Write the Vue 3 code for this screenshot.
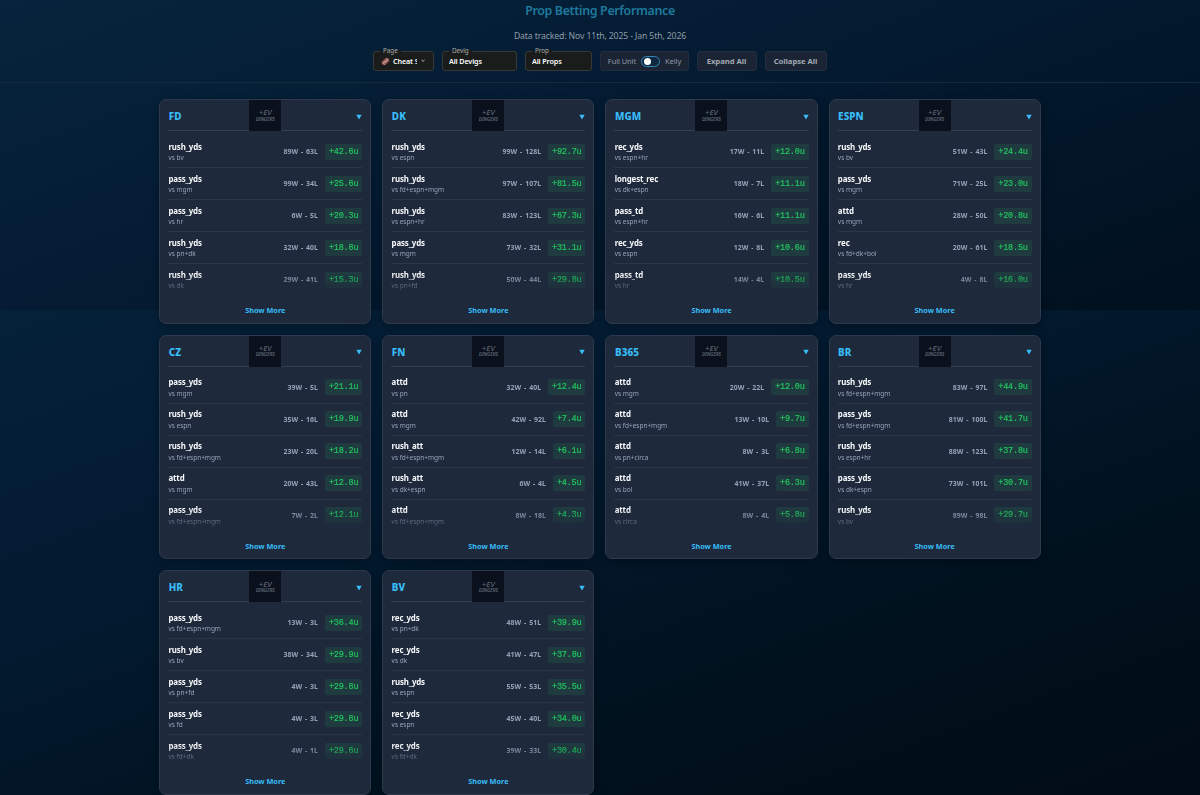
<script setup>
const s = `FD|rush_yds,bv,89W - 63L,42.6;pass_yds,mgm,99W - 34L,25.6;pass_yds,hr,6W - 5L,20.3;rush_yds,pn+dk,32W - 40L,18.8;rush_yds,dk,29W - 41L,15.3
DK|rush_yds,espn,99W - 128L,92.7;rush_yds,fd+espn+mgm,97W - 107L,81.5;rush_yds,espn+hr,83W - 123L,67.3;pass_yds,mgm,73W - 32L,31.1;rush_yds,pn+fd,50W - 44L,29.8
MGM|rec_yds,espn+hr,17W - 11L,12.0;longest_rec,dk+espn,18W - 7L,11.1;pass_td,espn+hr,16W - 6L,11.1;rec_yds,espn,12W - 8L,10.6;pass_td,hr,14W - 4L,10.5
ESPN|rush_yds,bv,51W - 43L,24.4;pass_yds,mgm,71W - 25L,23.0;attd,mgm,28W - 50L,20.8;rec,fd+dk+bol,20W - 61L,18.5;pass_yds,hr,4W - 8L,16.0
CZ|pass_yds,mgm,39W - 5L,21.1;rush_yds,espn,35W - 16L,19.9;rush_yds,fd+espn+mgm,23W - 20L,18.2;attd,mgm,20W - 43L,12.8;pass_yds,fd+espn+mgm,7W - 2L,12.1
FN|attd,pn,32W - 40L,12.4;attd,mgm,42W - 92L,7.4;rush_att,fd+espn+mgm,12W - 14L,6.1;rush_att,dk+espn,6W - 4L,4.5;attd,fd+espn+mgm,8W - 18L,4.3
B365|attd,mgm,20W - 22L,12.0;attd,fd+espn+mgm,13W - 10L,9.7;attd,pn+circa,8W - 3L,6.8;attd,bol,41W - 37L,6.3;attd,circa,8W - 4L,5.8
BR|rush_yds,fd+espn+mgm,83W - 97L,44.9;pass_yds,fd+espn+mgm,81W - 100L,41.7;rush_yds,espn+hr,88W - 123L,37.8;pass_yds,dk+espn,73W - 101L,30.7;rush_yds,bv,89W - 98L,29.7
HR|pass_yds,fd+espn+mgm,13W - 3L,36.4;rush_yds,bv,38W - 34L,29.9;pass_yds,pn+fd,4W - 3L,29.8;pass_yds,fd,4W - 3L,29.8;pass_yds,fd+dk,4W - 1L,29.6
BV|rec_yds,pn+dk,48W - 51L,39.9;rec_yds,dk,41W - 47L,37.8;rush_yds,espn,55W - 53L,35.5;rec_yds,espn,45W - 40L,34.0;rec_yds,fd+dk,39W - 33L,30.4`
const books = s.split('\n').map(line => {
  const [name, rows] = line.split('|')
  return { name, rows: rows.split(';').map(r => { const [prop, vs, record, units] = r.split(','); return { prop, vs, record, units } }) }
})
</script>

<template>
  <div class="page">
    <header>
      <h1>Prop Betting Performance</h1>
      <p class="tracked">Data tracked: Nov 11th, 2025 - Jan 5th, 2026</p>
      <div class="controls">
        <div class="select page-select">
          <span class="label">Page</span>
          <svg class="ball" viewBox="0 0 10 10"><g transform="rotate(-42 5 5)"><ellipse cx="5" cy="5" rx="4.8" ry="2.9" fill="#8d4e49"/><path d="M2.1 2.9v4.2M7.9 2.9v4.2M3.4 5h3.2M4.2 4.2v1.6M5.8 4.2v1.6" stroke="#ded3cf" stroke-width=".8"/></g></svg>
          <span class="value">Cheat Sheets</span>
          <svg class="chev" viewBox="0 0 6 4"><path d="M1.5 1 3 2.4 4.5 1" fill="none" stroke="#ccc" stroke-width=".9"/></svg>
        </div>
        <div class="select devig"><span class="label">Devig</span><span class="value">All Devigs</span></div>
        <div class="select prop-select"><span class="label">Prop</span><span class="value">All Props</span></div>
        <div class="toggle"><span>Full Unit</span><i class="switch"></i><span>Kelly</span></div>
        <button class="expand">Expand All</button>
        <button class="collapse">Collapse All</button>
      </div>
    </header>
    <main>
      <section v-for="b in books" :key="b.name" class="card">
        <div class="head">
          <h2>{{ b.name }}</h2>
          <div class="logo"><span class="ev">+EV</span><span class="ding">DINGERS</span></div>
          <svg class="arrow" viewBox="0 0 6 6"><path d="M.3 .7h5.4L3 5.6z" fill="#38bdf8"/></svg>
        </div>
        <div class="rows">
          <div v-for="(r, i) in b.rows" :key="i" class="row">
            <div class="name"><b>{{ r.prop }}</b><small>vs {{ r.vs }}</small></div>
            <span class="record">{{ r.record }}</span>
            <span class="units">+{{ r.units }}u</span>
          </div>
        </div>
        <div class="more">Show More</div>
      </section>
    </main>
  </div>
</template>

<style>
body { margin: 0; background: #01101f; overflow: hidden; }
</style>
<style scoped>
* { box-sizing: border-box; }
.page {
  height: 795px; overflow: hidden; font-family: "Noto Sans", sans-serif; color: #fff;
  background: linear-gradient(160deg, #05213a 0%, #031a30 36%, #01121f 68%, #010b15 100%) 0 310px / 100% 485px no-repeat,
    linear-gradient(160deg, #06243d 0%, #041b32 45%, #01101e 100%) 0 0 / 100% 310px no-repeat;
}
header { height: 83px; border-bottom: 1px solid #142a3d; text-align: center; }
h1 { margin: 0; height: 22px; font-size: 12.4px; line-height: 22px; font-weight: 600; letter-spacing: -.33px; color: #1f7a9d; }
.tracked { margin: 6px 0 0; height: 16px; font-size: 8.7px; line-height: 17px; letter-spacing: -.13px; color: #8f9ba7; }
.controls { display: flex; justify-content: center; margin-top: 7px; gap: 8px; height: 20px; }
.select { position: relative; display: flex; align-items: center; height: 20px; border: 1px solid #373a34; border-radius: 3px; background: #1a1b1b; padding: 0 6px; font-size: 7.2px; font-weight: 600; letter-spacing: -.12px; }
.label { position: absolute; left: 6px; top: -6px; line-height: 9px; padding: 0 3px; font-size: 6.3px; font-weight: 400; letter-spacing: 0; color: #a9aaa9; background: linear-gradient(transparent 45%, #1a1b1b 45%); }
.value { white-space: nowrap; overflow: hidden; }
.page-select { width: 61px; padding-left: 7px; }
.page-select .value { width: 24px; margin-left: 3px; }
.ball { width: 9px; height: 9px; flex: none; }
.chev { width: 6px; height: 4px; margin-left: 3px; flex: none; }
.devig { width: 75px; }
.prop-select { width: 67px; }
.toggle { display: flex; align-items: center; justify-content: center; gap: 5px; width: 89px; border: 1px solid #222d3e; border-radius: 3px; background: #1a2434; color: #929ba7; font-size: 7.4px; letter-spacing: -.05px; }
.switch { width: 19px; height: 11px; border: 1px solid #3286b5; border-radius: 6px; background: #102940; padding: 1px 2px; }
.switch::before { content: ""; display: block; width: 7px; height: 7px; border-radius: 50%; background: #fff; }
button { font: 700 7.7px "Noto Sans", sans-serif; color: #a3a8b1; border: 1px solid #222d3e; border-radius: 3px; background: #1a2434; padding: 0 1px 0 0; letter-spacing: -.04px; }
.expand { width: 60px; }
.collapse { width: 62px; }
main { width: 881.5px; margin: 16px 0 0 159.2px; display: grid; grid-template-columns: repeat(4, 1fr); column-gap: 11px; row-gap: 11px; }
.card { height: 224.7px; border: 1px solid #2e394b; border-radius: 7px; background: #1e293b; padding: 0 8px; box-shadow: 0 3px 8px #0004; }
.head { position: relative; display: flex; align-items: center; justify-content: space-between; height: 31px; border-bottom: 1px solid #334052; padding-top: 2px; }
h2 { margin: 0 0 0 .5px; font-size: 9.9px; font-weight: 800; letter-spacing: .1px; color: #38bdf8; }
.logo { position: absolute; left: 81px; top: 0; width: 32px; height: 31px; background: #0a101c; display: flex; flex-direction: column; align-items: center; justify-content: center; font-style: italic; color: #5d6675; }
.ev { font-size: 7.8px; line-height: 7.5px; font-weight: 500; }
.ding { font-size: 4.8px; line-height: 5px; font-weight: 600; letter-spacing: -.1px; }
.arrow { width: 6px; height: 6px; position: relative; top: .6px; }
.rows { padding-top: 5px; height: 164px; -webkit-mask-image: linear-gradient(#000 87%, #0000 102%); mask-image: linear-gradient(#000 87%, #0000 102%); }
.row { display: flex; align-items: center; height: 32px; border-bottom: 1px solid #2b3648; }
.name { flex: 1; padding-left: .3px; }
.name b { display: block; font-size: 7.9px; line-height: 11px; padding-top: .6px; font-weight: 700; letter-spacing: -.14px; color: #f8fafc; }
.name small { display: block; font-size: 6.5px; line-height: 9px; padding-top: .4px; letter-spacing: -.02px; color: #94a3b8; }
.record { font-size: 6.9px; font-weight: 700; letter-spacing: .04px; word-spacing: 1px; color: #94a3b8; }
.units { margin-left: 7px; height: 16px; line-height: 16px; padding: 0 4px; border-radius: 2px; background: #1f3b40; color: #22c55e; font-family: "Liberation Mono", monospace; font-size: 8.5px; letter-spacing: -.2px; font-weight: 400; -webkit-text-stroke: .2px #22c55e; }
.more { height: 28px; padding-top: 8px; text-align: center; font-size: 7.3px; line-height: 14px; font-weight: 700; color: #38bdf8; }
</style>
